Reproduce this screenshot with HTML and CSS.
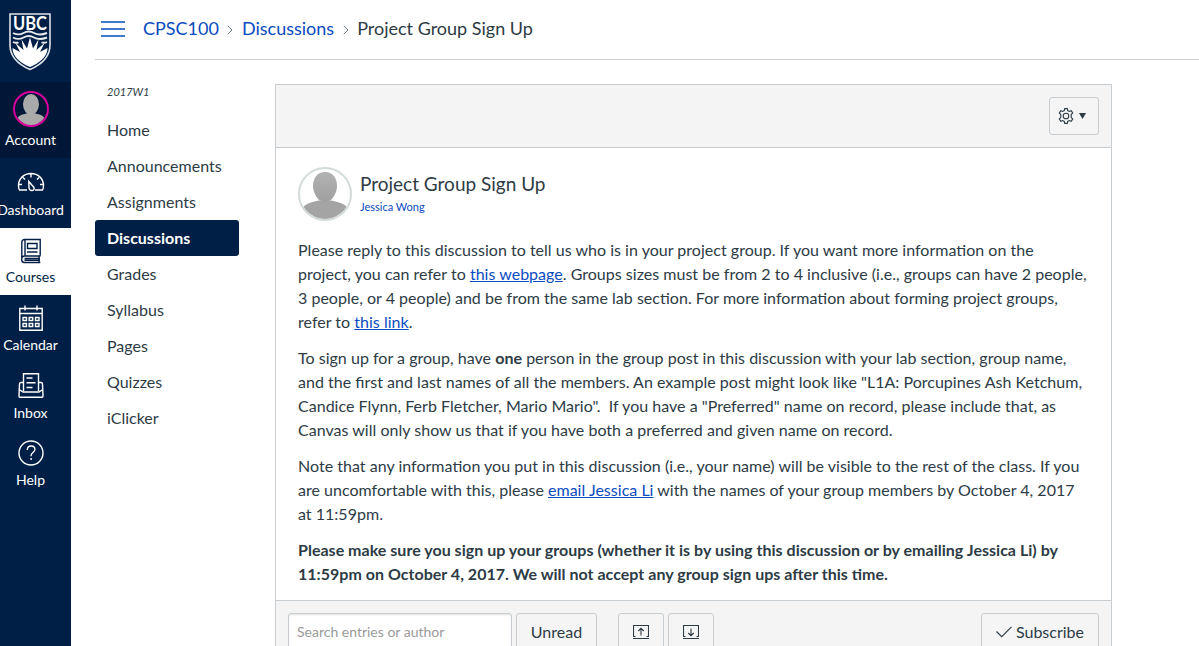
FILE: index.html
```html
<!DOCTYPE html>
<html lang="en">
<head>
<meta charset="utf-8">
<title>Project Group Sign Up</title>
<link rel="stylesheet" href="styles.css">
</head>
<body>
<div class="app">
  <nav class="global-nav">
    <a class="logo">
      <svg width="42" height="58" viewBox="0 0 42 58">
        <path d="M1 1h40v31c0 11.500-8.500 19.500-20 24.500C9.500 51.500 1 43.500 1 32z" fill="#001f47" stroke="#dfe4ea" stroke-width="1.600"/>
        <path d="M4 20c4 2 7 2 10.500 0s7-2 10.500 0 8 2 13 0M4 24.500c4 2 7 2 10.500 0s7-2 10.500 0 8 2 13 0M4 29c2 1 4 1 5.500.3M32.500 29.300c2 .7 3.500.7 5.500-.3" fill="none" stroke="#e6eaef" stroke-width="1.900"/>
        <path d="M3.500 35l7.500 4-4.500-9 8 7-2-10.500 5.500 9L21 24.500l3 11 5.500-9-2 10.500 8-7-4.500 9 7.500-4c0 8-6.500 14.500-17.500 19C10 49.500 3.500 43 3.500 35z" fill="#fff"/>
        <text x="21" y="16.500" text-anchor="middle" textLength="34" lengthAdjust="spacingAndGlyphs" class="logo-text">UBC</text>
      </svg>
    </a>
    <a class="nav-item account">
      <svg width="36" height="36" viewBox="0 0 54 54">
        <path d="M7 40c4-5 10-5 14-6.500h12c4 1.500 10 1.500 14 6.500-5 7-12 12-20 12S11 46 7 40z" fill="#aaa"/>
        <ellipse cx="27" cy="20" rx="12" ry="15.500" fill="#aaa"/>
        <circle cx="27" cy="27" r="25.500" fill="none" stroke="#d8009c" stroke-width="3"/>
      </svg>
      <span>Account</span>
    </a>
    <a class="nav-item dashboard">
      <svg width="28" height="20" viewBox="0 0 28 20">
        <path d="M10 18H2.500c-.7-1-1-3-1-4.500C1.500 6.500 7 1.500 14 1.500s12.500 5 12.500 12c0 1.500-.3 3.500-1 4.500H18M14 2v3.500M6 5.500l2 2M22 5.500l-2 2M2 12.500h3M26 12.500h-3M11.800 9.500l.2 6.500c.2 1.500 1.200 2.500 2.800 2.500 1.700 0 2.900-1.500 2.200-3z"/>
      </svg>
      <span>Dashboard</span>
    </a>
    <a class="nav-item courses active">
      <svg width="22" height="26" viewBox="0 0 22 26">
        <path d="M20.200 17.500V1.500H4.500C3 1.500 1.800 2.500 1.800 4v18c0 1.500 1 2.500 2.500 2.500h16M20.500 18H4.500C3 18 2 19 2 20M4.500 20.500h15.500M4.500 22.300h15.500M19 18v6M5 2v15.500M7.500 5.500h9.500v5H7.500zM7 14h10.500"/>
      </svg>
      <span>Courses</span>
    </a>
    <a class="nav-item calendar">
      <svg width="24" height="26" viewBox="0 0 24 26">
        <path d="M.8 3.500h22.400v21.700H.8zM.8 8.500h22.400M6 .5v5M18 .5v5M4 12.500h3.500v3H4zM10.200 12.500h3.500v3h-3.500zM16.500 12.500H20v3h-3.500zM4 18.500h3.500v3H4zM10.200 18.500h3.500v3h-3.500zM16.500 18.500H20v3h-3.500z"/>
      </svg>
      <span>Calendar</span>
    </a>
    <a class="nav-item inbox">
      <svg width="26" height="25" viewBox="0 0 26 25">
        <path d="M5.500 18V.8h15V18M8.500 5h6M8.500 9.800h9M8.500 14.500h6M5.500 9.500H3c-1 0-1.500.5-1.500 1.500L1 23c0 .8.400 1.200 1 1.200h22c.6 0 1-.4 1-1.200l-.5-12c0-1-.5-1.500-1.500-1.500h-2.500M1.200 16.500l3.800 2.500h16l3.800-2.500"/>
      </svg>
      <span>Inbox</span>
    </a>
    <a class="nav-item help">
      <svg width="26" height="26" viewBox="0 0 26 26">
        <circle cx="13" cy="13" r="12"/>
        <path d="M9.300 10c0-2.500 1.500-4 3.800-4s3.800 1.400 3.800 3.500c0 3-3.800 3-3.800 6v.8M13.100 18v2"/>
      </svg>
      <span>Help</span>
    </a>
  </nav>

  <div class="page">
    <header class="topbar">
      <span class="menu"><i></i><i></i><i></i></span>
      <a class="crumb c1">CPSC100</a>
      <svg class="sep" width="6" height="10" viewBox="0 0 6 10"><path d="M.8.8L5 5 .8 9.200"/></svg>
      <a class="crumb c2">Discussions</a>
      <svg class="sep" width="6" height="10" viewBox="0 0 6 10"><path d="M.8.8L5 5 .8 9.200"/></svg>
      <span class="crumb here">Project Group Sign Up</span>
    </header>

    <div class="columns">
      <aside class="course-nav">
        <div class="term">2017W1</div>
        <a>Home</a>
        <a>Announcements</a>
        <a>Assignments</a>
        <a class="current">Discussions</a>
        <a>Grades</a>
        <a>Syllabus</a>
        <a>Pages</a>
        <a>Quizzes</a>
        <a>iClicker</a>
      </aside>

      <main class="discussion">
        <div class="toolbar">
          <button class="btn gear">
            <svg width="16" height="16" viewBox="0 0 16 16"><path d="M6.700.6h2.600l.4 2 1.500.8 2-.7 1.500 2.300-1.500 1.500v2.900l1.500 1.600-1.500 2.300-2-.7-1.500.8-.4 2H6.700l-.4-2-1.500-.8-2 .7L1.300 11l1.500-1.600V6.500L1.300 5l1.500-2.300 2 .7 1.500-.8z"/><circle cx="8" cy="8" r="2.800"/></svg>
            <svg class="caret" width="7" height="6" viewBox="0 0 7 6"><path d="M0 0h7L3.500 6z"/></svg>
          </button>
        </div>

        <article class="topic">
          <div class="topic-head">
            <svg width="54" height="54" viewBox="0 0 54 54">
              <defs><linearGradient id="shade" x1="0" y1="0" x2="0" y2="1"><stop offset="0" stop-color="#b2b2b2"/><stop offset="1" stop-color="#a0a0a0"/></linearGradient></defs>
              <path d="M5.500 40c3-4 10-5.500 15-6.500h13c5 1 12 2.500 15 6.500-5 7.500-13 12-21.500 12S10.500 47.500 5.500 40z" fill="#a4a4a4"/>
              <path d="M27 5c7.500 0 12 6 12 14 0 6-3.500 12-7 14.500-3 1.300-7 1.300-10 0-3.500-2.500-7-8.500-7-14.500 0-8 4.500-14 12-14z" fill="url(#shade)"/>
              <circle cx="27" cy="27" r="26" fill="none" stroke="#d3dbda" stroke-width="2"/>
            </svg>
            <div>
              <h1>Project Group Sign Up</h1>
              <a class="author">Jessica Wong</a>
            </div>
          </div>
          <div class="message">
            <p>Please reply to this discussion to tell us who is in your project group. If you want more information on the<br>project, you can refer to <a>this webpage</a>. Groups sizes must be from 2 to 4 inclusive (i.e., groups can have 2 people,<br>3 people, or 4 people) and be from the same lab section. For more information about forming project groups,<br>refer to <a>this link</a>.</p>
            <p>To sign up for a group, have <strong>one</strong> person in the group post in this discussion with your lab section, group name,<br>and the first and last names of all the members. An example post might look like "L1A: Porcupines Ash Ketchum,<br>Candice Flynn, Ferb Fletcher, Mario Mario".&nbsp; If you have a "Preferred" name on record, please include that, as<br>Canvas will only show us that if you have both a preferred and given name on record.</p>
            <p>Note that any information you put in this discussion (i.e., your name) will be visible to the rest of the class. If you<br>are uncomfortable with this, please <a>email Jessica Li</a> with the names of your group members by October 4, 2017<br>at 11:59pm.</p>
            <p><strong>Please make sure you sign up your groups (whether it is by using this discussion or by emailing Jessica Li) by<br>11:59pm on October 4, 2017. We will not accept any group sign ups after this time.</strong></p>
          </div>
        </article>

        <div class="entry-tools">
          <input class="search" type="text" placeholder="Search entries or author">
          <button class="btn unread">Unread</button>
          <button class="btn square collapse"><svg width="16" height="15" viewBox="0 0 16 15"><path d="M2.500 11.500h-2V.5h15v11h-2M0 13.500h16M8 10.500v-7M5.300 6L8 3.300 10.700 6"/></svg></button>
          <button class="btn square"><svg width="16" height="15" viewBox="0 0 16 15"><path d="M2.500 11.500h-2V.5h15v11h-2M0 13.500h16M8 3.500v7M5.300 8L8 10.700 10.700 8"/></svg></button>
          <button class="btn subscribe"><svg width="16" height="12" viewBox="0 0 16 12"><path d="M.5 5.500L5.700 10.700 15.500.8"/></svg>Subscribe</button>
        </div>
      </main>
    </div>
  </div>
</div>
</body>
</html>
```

FILE: styles.css
```css
* { box-sizing: border-box; }

body {
  margin: 0;
  height: 646px;
  overflow: hidden;
  background: #fff;
  color: #2d3b45;
  font: 16px/24px Lato, "Liberation Sans", sans-serif;
}

a { color: #0a4bbf; }

.app { display: flex; height: 646px; }

/* Global navigation */
.global-nav {
  width: 71px;
  flex: none;
  overflow: hidden;
  background: #001f47;
}
.logo { display: block; height: 82px; padding: 13px 0 0 9px; }
.logo svg { display: block; }
.logo-text { font: 700 18.5px Lato, sans-serif; fill: #fff; }

.nav-item {
  display: flex;
  flex-direction: column;
  align-items: center;
  height: 68px;
  padding-right: 10px;
  color: #fff;
  font-size: 14px;
  line-height: 18px;
  white-space: nowrap;
}
.nav-item svg { flex: none; fill: none; stroke: currentColor; stroke-width: 1.4; }
.nav-item span { margin-top: auto; margin-bottom: 9px; }
.account { height: 76px; padding-top: 9px; background: #001737; }
.account svg { stroke: none; }
.dashboard { height: 70px; padding-top: 14px; }
.courses { height: 67px; padding-top: 10px; }
.active { background: #fff; color: #001f47; }
.calendar { padding-top: 10px; }
.inbox { padding-top: 10px; }
.help { height: 67px; padding-top: 9px; }

/* Breadcrumbs */
.page { flex: 1; padding-left: 24px; }
.topbar {
  display: flex;
  align-items: center;
  height: 60px;
  padding: 0 0 3px 6px;
  border-bottom: 1px solid #c7cdd1;
  font-size: 18px;
  white-space: nowrap;
}
.menu { display: grid; gap: 5px; width: 24px; margin: 1px 18px 0 0; }
.menu i { height: 2px; background: #4079cd; }
.sep { margin: 3px 8.5px 0 8.5px; fill: none; stroke: #73818c; }

.columns { display: flex; }

/* Course menu */
.course-nav { width: 144px; flex: none; padding-top: 23px; margin-right: 36px; }
.term { height: 29px; padding-left: 12px; font-size: 11px; line-height: 18px; font-style: italic; }
.course-nav a {
  display: block;
  height: 36px;
  padding-left: 12px;
  line-height: 36px;
  color: #2d3b45;
}
.course-nav .current { background: #001f47; border-radius: 3px; color: #fff; font-weight: 700; }

/* Discussion panel */
.discussion { width: 837px; margin-top: 24px; border: 1px solid #c7cdd1; }
.toolbar {
  display: flex;
  justify-content: flex-end;
  height: 63px;
  padding: 12px;
  background: #f4f4f4;
  border-bottom: 1px solid #c7cdd1;
}
.btn {
  display: flex;
  align-items: center;
  justify-content: center;
  height: 38px;
  padding: 0;
  border: 1px solid #c7cdd1;
  border-radius: 3px;
  background: #f5f5f5;
  color: #2d3b45;
  font: inherit;
}
.btn svg { fill: none; stroke: currentColor; stroke-width: 1.1; }
.gear { width: 50px; gap: 5px; padding-right: 5px; }
.btn .caret { fill: currentColor; stroke: none; }

.topic { height: 452px; padding: 19px 22px 0; }
.topic-head { display: flex; gap: 8px; height: 54px; }
h1 { margin: 4px 0 1px; font-size: 19px; font-weight: 400; line-height: 25px; }
.author { display: block; font-size: 11px; line-height: 20px; }
.message {
  padding-top: 17px;
  white-space: nowrap;
  letter-spacing: .02px;
  font-feature-settings: "liga" 1;
}
.message p { margin: 0 0 12px; }
.message a { text-decoration: underline; }

.entry-tools {
  display: flex;
  height: 63px;
  padding: 12px;
  background: #f4f4f4;
  border-top: 1px solid #c7cdd1;
}
.search {
  width: 224px;
  height: 38px;
  padding: 0 8px 2px;
  border: 1px solid #c7cdd1;
  border-radius: 3px;
  background: #fff;
  box-shadow: inset 0 1px 2px rgba(0, 0, 0, .12);
  font: 14px Lato, sans-serif;
}
.search::placeholder { color: #9a9a9a; }
.unread { width: 81px; margin-left: 4px; }
.square { width: 46px; margin-left: 4px; }
.collapse { margin-left: 21px; }
.subscribe { width: 118px; gap: 4px; margin-left: auto; }
```
